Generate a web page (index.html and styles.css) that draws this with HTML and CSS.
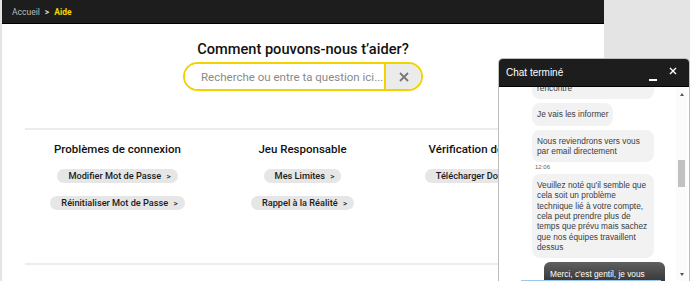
FILE: index.html
```html
<!DOCTYPE html>
<html lang="fr">
<head>
    <meta charset="UTF-8">
    <meta name="viewport" content="width=device-width, initial-scale=1.0">
    <title>Aide</title>
    <link rel="stylesheet" href="styles.css">
</head>
<body>
    <div class="page">
        <header class="topbar">
            <span class="crumb">Accueil</span>
            <span class="crumb-sep">&gt;</span>
            <span class="crumb current">Aide</span>
        </header>
        <main class="help">
            <h1 class="help-title">Comment pouvons-nous t’aider?</h1>
            <div class="search">
                <input type="text" class="search-input" placeholder="Recherche ou entre ta question ici...">
                <button class="search-clear" aria-label="Effacer">
                    <svg width="10" height="10" viewBox="0 0 10 10"><path d="M1 1L9 9M9 1L1 9" stroke="#777" stroke-width="1.8" fill="none"/></svg>
                </button>
            </div>
            <div class="divider"></div>
            <div class="topics">
                <div class="topic">
                    <h2>Problèmes de connexion</h2>
                    <a class="pill" href="#">Modifier Mot de Passe <span>&gt;</span></a>
                    <a class="pill" href="#">Réinitialiser Mot de Passe <span>&gt;</span></a>
                </div>
                <div class="topic">
                    <h2>Jeu Responsable</h2>
                    <a class="pill" href="#">Mes Limites <span>&gt;</span></a>
                    <a class="pill" href="#">Rappel à la Réalité <span>&gt;</span></a>
                </div>
                <div class="topic">
                    <h2>Vérification de Compte</h2>
                    <a class="pill" href="#">Télécharger Documents <span>&gt;</span></a>
                </div>
            </div>
            <div class="divider bottom"></div>
        </main>
    </div>

    <div class="chat">
        <div class="chat-head">
            <span class="chat-title">Chat terminé</span>
            <span class="chat-min"></span>
            <span class="chat-close">
                <svg width="8" height="8" viewBox="0 0 8 8"><path d="M1 1L7 7M7 1L1 7" stroke="#fff" stroke-width="1.4" fill="none"/></svg>
            </span>
        </div>
        <div class="chat-body">
            <div class="messages">
                <div class="msg first">rencontre</div>
                <div class="msg">Je vais les informer</div>
                <div class="msg">Nous reviendrons vers vous par email directement</div>
                <div class="msg-time">12:06</div>
                <div class="msg">Veuillez noté qu'il semble que cela soit un problème technique lié à votre compte, cela peut prendre plus de temps que prévu mais sachez que nos équipes travaillent dessus</div>
                <div class="msg mine">Merci, c'est gentil, je vous remercie</div>
            </div>
            <div class="scrollbar">
                <span class="arrow up"></span>
                <span class="thumb"></span>
                <span class="arrow down"></span>
            </div>
        </div>
        <div class="chat-input-edge"></div>
    </div>
</body>
</html>
```
FILE: styles.css
```css
body {
    margin: 0;
    background-color: #e4e4e4;
    font-family: Roboto, "Liberation Sans", sans-serif;
    height: 281px;
    overflow: hidden;
}

.page {
    width: 602px;
    margin-left: 2px;
    background-color: #fff;
    min-height: 281px;
}

.topbar {
    height: 23px;
    background-color: #1d1d1d;
    border-bottom: 1px solid #000;
    display: flex;
    align-items: center;
    padding-left: 10px;
    font-size: 8.5px;
    color: #bbb;
}

.crumb-sep {
    margin: 0 5px 0 5px;
    color: #ddd;
    font-weight: bold;
}

.crumb.current {
    color: #f5d400;
    font-weight: bold;
}

.help {
    display: flex;
    flex-direction: column;
    align-items: center;
    padding-top: 16px;
}

.help-title {
    margin: 0;
    font-size: 14.6px;
    line-height: 18px;
    font-weight: 500;
    color: #111;
}

.search {
    display: flex;
    width: 236px;
    height: 25px;
    margin-top: 4px;
    border: 2px solid #f2d300;
    border-radius: 15px;
    overflow: hidden;
}

.search-input {
    flex: 1;
    border: none;
    outline: none;
    padding: 0 0 0 16px;
    font-family: Roboto, sans-serif;
    font-size: 11.5px;
    color: #333;
    background: #fff;
}

.search-input::placeholder {
    color: #8a8a8a;
}

.search-clear {
    width: 37px;
    border: none;
    border-left: 2px solid #f2d300;
    background-color: #ebebeb;
    display: flex;
    align-items: center;
    justify-content: center;
    padding: 0;
}

.divider {
    align-self: stretch;
    height: 2px;
    background-color: #ececec;
    margin: 37px 22px 0 23px;
}

.divider.bottom {
    margin-top: 53px;
}

.topics {
    align-self: stretch;
    display: grid;
    grid-template-columns: repeat(3, 185px);
    padding-left: 23px;
    padding-top: 12px;
}

.topic {
    display: flex;
    flex-direction: column;
    align-items: center;
}

.topic h2 {
    margin: 0;
    font-size: 11.5px;
    line-height: 15px;
    font-weight: 500;
    color: #111;
    white-space: nowrap;
}

.pill {
    display: inline-block;
    margin-top: 12px;
    height: 14px;
    line-height: 14px;
    padding: 0 7px 0 11px;
    border-radius: 7px;
    background-color: #e6e6e6;
    color: #1a1a1a;
    font-size: 9.2px;
    font-weight: 500;
    text-decoration: none;
    white-space: nowrap;
}

.pill + .pill {
    margin-top: 13px;
}

.pill span {
    margin-left: 3px;
    font-size: 8px;
}

/* chat window over the page */
.chat {
    position: fixed;
    top: 58px;
    right: 0;
    bottom: 0;
    width: 190px;
    background-color: #fff;
    border: 1px solid #bdbdbd;
    border-bottom: none;
    border-radius: 5px 5px 0 0;
    display: flex;
    flex-direction: column;
    font-family: "Liberation Sans", Arial, sans-serif;
    overflow: hidden;
}

.chat-head {
    height: 27px;
    flex: none;
    background-color: #1d1d1d;
    border-bottom: 1px solid #000;
    display: flex;
    align-items: center;
    padding: 0 12px 0 7px;
    color: #fff;
}

.chat-title {
    flex: 1;
    font-size: 10px;
}

.chat-min {
    width: 8px;
    height: 2px;
    margin-top: 14px;
    margin-right: 12px;
    background-color: #fff;
}

.chat-close {
    display: flex;
    margin-top: -4px;
}

.chat-body {
    flex: 1;
    display: flex;
    min-height: 0;
}

.messages {
    flex: 1;
    overflow: hidden;
    display: flex;
    flex-direction: column;
    align-items: flex-start;
    gap: 4px;
    padding: 0 11px 0 33px;
}

.msg {
    max-width: 112px;
    padding: 6px 5px;
    border-radius: 8px;
    background-color: #f2f2f2;
    color: #3c3c3c;
    font-size: 8.3px;
    line-height: 10.3px;
    flex: none;
}

.msg.first {
    width: 112px;
    margin-top: -10px;
}

.msg-time {
    font-size: 6px;
    line-height: 6px;
    color: #666;
    margin: -2px 0 0 3px;
}

.msg.mine {
    align-self: flex-end;
    width: 109px;
    max-width: 109px;
    padding: 7px 6px 6px;
    background: linear-gradient(#606060, #2e2e2e 70%);
    color: #fff;
    border-radius: 6px;
}

.scrollbar {
    width: 11px;
    margin-right: 2px;
    background-color: #fbfbfb;
    display: flex;
    flex-direction: column;
    align-items: center;
}

.arrow {
    width: 0;
    height: 0;
    border-left: 2.5px solid transparent;
    border-right: 2.5px solid transparent;
}

.arrow.up {
    margin-top: 6px;
    border-bottom: 3px solid #555;
}

.thumb {
    width: 7px;
    height: 27px;
    margin-top: 64px;
    background-color: #c1c1c1;
}

.arrow.down {
    margin-top: auto;
    margin-bottom: 5px;
    border-top: 3px solid #555;
}

.chat-input-edge {
    position: absolute;
    left: 22px;
    bottom: 0;
    width: 140px;
    height: 1px;
    background-color: #9cc7ea;
}
```
